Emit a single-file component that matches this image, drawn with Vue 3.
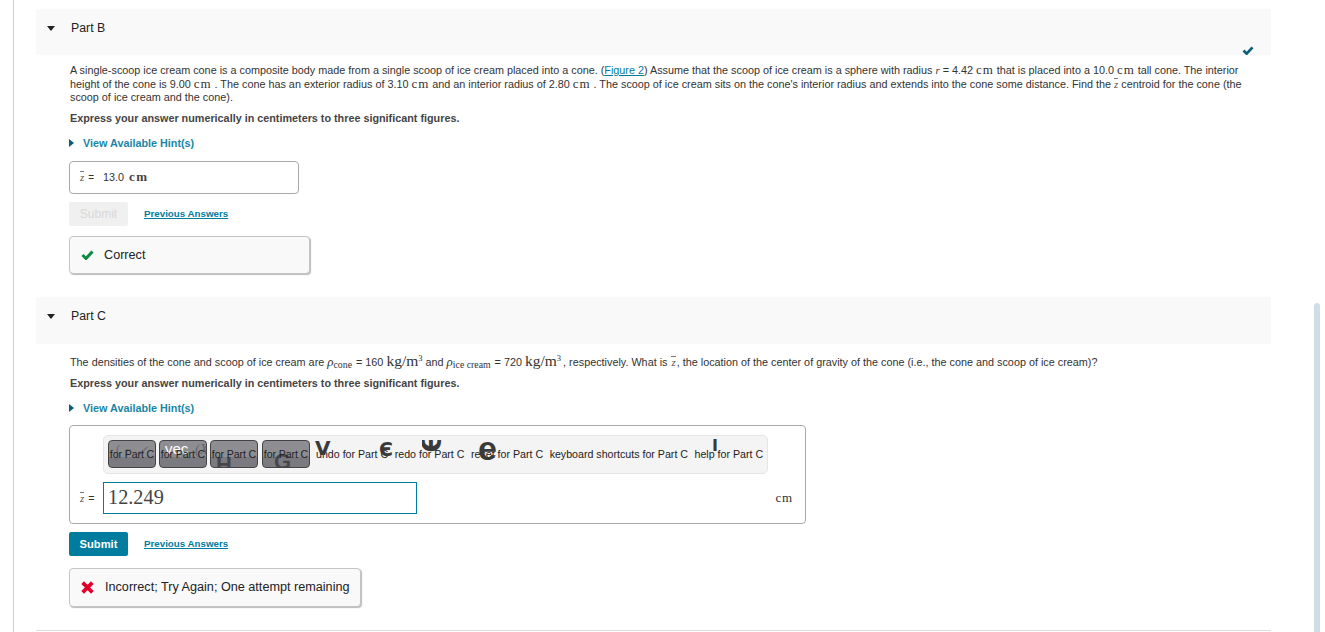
<script setup>
const tools = [
  { cls: 'ti0', icon: '∫ r ✓' },
  { cls: 'ti1', icon: 'vec' },
  { cls: 'ti2', icon: 'H' },
  { cls: 'ti3', icon: 'G' }
]
const labels = ['undo for Part C', 'redo for Part C', 'reset for Part C', 'keyboard shortcuts for Part C', 'help for Part C']
const glyphs = [
  { text: 'V', cls: 'g1' },
  { text: 'Є', cls: 'g2' },
  { text: 'e', cls: 'g4' },
  { text: 'I', cls: 'g5' }
]
</script>

<template>
  <div class="page">
    <main class="content">
      <section class="part part-b">
        <header class="head">
          <span class="caret"></span>
          <span class="title">Part B</span>
          <svg class="done" viewBox="0 0 12 10" width="12" height="9"><path d="M1 5l3.5 3.5L11 1.5" fill="none" stroke="#0b5f78" stroke-width="3"/></svg>
        </header>
        <div class="body">
          <p class="q q-b">A single-scoop ice cream cone is a composite body made from a single scoop of ice cream placed into a cone. (<a>Figure 2</a>) Assume that the scoop of ice cream is a sphere with radius <i class="m">r</i> = 4.42 <span class="m cm">cm</span> that is placed into a 10.0 <span class="m cm">cm</span> tall cone. The interior<br>height of the cone is 9.00 <span class="m cm">cm</span> . The cone has an exterior radius of 3.10 <span class="m cm">cm</span> and an interior radius of 2.80 <span class="m cm">cm</span> . The scoop of ice cream sits on the cone's interior radius and extends into the cone some distance. Find the <i class="m over">z</i> centroid for the cone (the<br>scoop of ice cream and the cone).</p>
          <p class="strong">Express your answer numerically in centimeters to three significant figures.</p>
          <div class="hint"><span class="tri"></span>View Available Hint(s)</div>
          <div class="answer-static"><i class="m over">z</i> <span class="eq">=</span> <span class="val">13.0</span> <span class="m unit">cm</span></div>
          <div class="actions">
            <button class="submit off">Submit</button>
            <a class="prev">Previous Answers</a>
          </div>
          <div class="feedback fb-ok">
            <svg viewBox="0 0 12 10" width="13" height="10"><path d="M1 5l3.5 3.5L11 1.5" fill="none" stroke="#0b8a3e" stroke-width="3"/></svg>
            <span>Correct</span>
          </div>
        </div>
      </section>

      <section class="part part-c">
        <header class="head">
          <span class="caret"></span>
          <span class="title">Part C</span>
        </header>
        <div class="body">
          <p class="q q-c">The densities of the cone and scoop of ice cream are <i class="m rho">ρ</i><sub class="m">cone</sub> = 160 <span class="m big">kg/m<sup>3</sup></span> and <i class="m rho">ρ</i><sub class="m">ice cream</sub> = 720 <span class="m big last">kg/m<sup>3</sup></span>, respectively. What is <i class="m over zc">z</i>, the location of the center of gravity of the cone (i.e., the cone and scoop of ice cream)?</p>
          <p class="strong">Express your answer numerically in centimeters to three significant figures.</p>
          <div class="hint"><span class="tri"></span>View Available Hint(s)</div>
          <div class="answer-box">
            <div class="toolbar">
              <div v-for="t in tools" :key="t.cls" class="tool">
                <span class="tool-icon" :class="t.cls">{{ t.icon }}</span>
                <span v-if="t.cls === 'ti1'" class="tool-icon ti1b">(X</span>
                <span class="tool-text">for Part C</span>
              </div>
              <div v-for="l in labels" :key="l" class="tlabel">{{ l }}</div>
              <span v-for="g in glyphs" :key="g.cls" class="glyph" :class="g.cls">{{ g.text }}</span>
              <span class="clip"><span class="glyph g3">Є</span></span>
            </div>
            <div class="entry">
              <span class="lhs"><i class="m over">z</i><span class="lhs-eq">=</span></span>
              <div class="field">12.249</div>
              <span class="m unit2">cm</span>
            </div>
          </div>
          <div class="actions a2">
            <button class="submit">Submit</button>
            <a class="prev">Previous Answers</a>
          </div>
          <div class="feedback fb-bad">
            <svg viewBox="0 0 12 12" width="13" height="13"><path d="M1.5 1.5l9 9M10.5 1.5l-9 9" stroke="#e0002b" stroke-width="3.4"/></svg>
            <span>Incorrect; Try Again; One attempt remaining</span>
          </div>
        </div>
      </section>
      <div class="rule"></div>
    </main>
    <div class="scroll"></div>
  </div>
</template>

<style>
html, body { margin: 0; background: #fff; }
</style>

<style scoped>
.page {
  position: relative;
  width: 1325px;
  height: 632px;
  overflow: hidden;
  box-sizing: border-box;
  padding: 9px 0 0 36px;
  font-family: "Liberation Sans", Arial, sans-serif;
  color: #333;
  background: #fff;
}
.page::before {
  content: "";
  position: absolute;
  left: 13px;
  top: 0;
  bottom: 0;
  width: 1px;
  background: #c5d3e4;
}
.content { width: 1235px; }
.head {
  position: relative;
  height: 46px;
  background: #f9f9f9;
  display: flex;
  align-items: center;
  padding-bottom: 8px;
  box-sizing: border-box;
  font-size: 12.3px;
  color: #222;
}
.part-c .head { height: 47px; }
.caret {
  width: 0; height: 0;
  margin: 0 16px 0 11px;
  border-left: 4.5px solid transparent;
  border-right: 4.5px solid transparent;
  border-top: 5px solid #222;
}
.done { position: absolute; right: 17px; bottom: 0; }
.body { padding-left: 33px; }
.q { margin: 0 0 0 1px; font-size: 10.82px; line-height: 13.5px; white-space: nowrap; }
.q-b { padding-top: 9px; }
.q-c { padding-top: 10px; line-height: 16px; }
.cm { font-size: 13px; line-height: 0; letter-spacing: .9px; color: #333; }
.strong { margin: 6px 0 0 1px; font-size: 10.8px; line-height: 14px; font-weight: 700; color: #444; }
.q-c + .strong { margin-top: 6px; }
.q a { color: #007c9e; text-decoration: underline; }
.m { font-family: "Liberation Serif", serif; }
.rho { font-size: 13px; line-height: 0; }
.over { position: relative; color: #555; }
.over::before { content: ""; position: absolute; left: 0; right: 0; top: 0; height: 1px; background: #777; }
.zc { margin: 0 1px; }
.big { font-size: 15.5px; line-height: 0; }
.last { margin-right: 2px; }
sub.m { font-size: 9.8px; line-height: 0; vertical-align: -2px; margin-right: 1px; }
sup { font-size: 8.5px; line-height: 0; vertical-align: 5px; }
.hint {
  margin-top: 11px;
  height: 14px;
  display: flex;
  align-items: center;
  font-size: 10.8px;
  font-weight: 700;
  color: #1a86a6;
}
.tri {
  width: 0; height: 0;
  margin-right: 9px;
  border-top: 4px solid transparent;
  border-bottom: 4px solid transparent;
  border-left: 5px solid #0a5d78;
}
.answer-static {
  margin-top: 11px;
  width: 230px;
  height: 33px;
  box-sizing: border-box;
  border: 1px solid #aaa;
  border-radius: 4px;
  display: flex;
  align-items: center;
  gap: 4px;
  padding-left: 10px;
  font-size: 10.8px;
}
.val { margin-left: 5px; }
.eq { font-size: 10px; }
.unit { font-size: 13px; letter-spacing: 1.5px; font-weight: 700; color: #444; margin-left: 1px; }
.actions {
  margin-top: 8px;
  display: flex;
  align-items: center;
  gap: 16px;
}
.submit {
  width: 59px;
  height: 24px;
  border: 0;
  border-radius: 2px;
  padding: 0;
  font: 700 11.2px "Liberation Sans", Arial, sans-serif;
  background: #007c9e;
  color: #fff;
}
.submit.off { background: #f0f0f0; color: #d8d8d8; font-weight: 400; font-size: 12px; }
.prev {
  font-size: 9.75px;
  font-weight: 700;
  color: #007c9e;
  text-decoration: underline;
}
.feedback {
  margin-top: 10px;
  height: 38px;
  width: max-content;
  box-sizing: border-box;
  display: flex;
  align-items: center;
  gap: 10px;
  padding: 0 10px 0 11px;
  background: #f9f9f9;
  border: 1px solid #c4c4c4;
  border-radius: 4px;
  box-shadow: 1px 1px 1px #bbb;
  font-size: 12.65px;
  color: #222;
}
.fb-ok { width: 241px; }
.fb-bad { margin-top: 12px; height: 39px; width: 292px; gap: 11px; }
.part-c { margin-top: 23px; }
.answer-box {
  margin-top: 10px;
  width: 737px;
  height: 99px;
  box-sizing: border-box;
  border: 1px solid #aaa;
  border-radius: 4px;
  padding: 9px 12px 0 33px;
}
.toolbar {
  position: relative;
  width: 665px;
  height: 39px;
  box-sizing: border-box;
  background: #f4f4f4;
  border: 1px solid #e6e6e6;
  border-radius: 5px;
  display: flex;
  align-items: center;
  padding-left: 4px;
  font-size: 10.65px;
  white-space: nowrap;
}
.tool {
  position: relative;
  width: 48px;
  height: 28px;
  box-sizing: border-box;
  margin-right: 3px;
  flex: none;
  overflow: hidden;
  border: 1px solid #444;
  border-radius: 4px;
  background: linear-gradient(#8e8d92 0 60%, #7b7a80 60% 100%);
  display: flex;
  align-items: center;
  justify-content: center;
  color: #222;
}
.tool:nth-child(3) { margin-right: 4px; }
.tool-text { position: relative; font-size: 10.6px; letter-spacing: -.1px; }
.tool-icon { position: absolute; line-height: 1; }
.ti0 { left: 6px; top: 1px; color: #6c6b70; font: italic 15px "Liberation Serif", serif; word-spacing: 2px; }
.ti1 { left: 5px; top: 0; color: #fff; font-size: 15px; }
.ti1b { left: 35px; top: 1px; color: #66656a; font: italic 14px "Liberation Serif", serif; }
.ti2 { left: 5px; top: 13px; font-size: 22px; color: #47474a; font-weight: 700; }
.ti3 { left: 11px; top: 10px; font-size: 22px; color: #47474a; font-weight: 700; }
.tlabel { margin-left: 6.5px; color: #222; }
.tlabel:nth-child(5) { margin-left: 3px; }
.glyph {
  position: absolute;
  font-family: "DejaVu Sans", sans-serif;
  font-weight: 700;
  line-height: 1;
  color: #3a3a3a;
}
.g1 { left: 211px; top: 2px; font-size: 20px; }
.g2 { left: 275px; top: 4px; font-size: 19px; }
.clip { position: absolute; left: 318px; top: 4px; width: 26px; height: 14px; overflow: hidden; }
.g3 { left: 0; top: -10px; font-size: 26px; transform: rotate(-90deg); }
.g4 { left: 374px; top: -5px; font: 700 34px/1 "Liberation Sans", sans-serif; }
.g5 { left: 608px; top: 2px; font-size: 16px; }
.entry {
  display: flex;
  align-items: center;
  margin: 8px 0 0 -26px;
}
.lhs { width: 26px; font-size: 10.8px; box-sizing: border-box; padding-left: 3px; }
.lhs-eq { margin-left: 4px; }
.field {
  width: 314px;
  height: 32px;
  box-sizing: border-box;
  border: 1px solid #007c9e;
  padding-left: 4px;
  font: 20.3px/28px "Liberation Serif", serif;
  color: #444;
}
.unit2 { margin-left: auto; font-size: 13px; letter-spacing: .8px; color: #333; }
.a2 { margin-top: 8px; }
.rule { height: 1px; margin-top: 23px; background: #ddd; }
.scroll {
  position: absolute;
  left: 1314px;
  top: 303px;
  width: 6px;
  height: 329px;
  background: #d0dce6;
  border-radius: 3px 3px 0 0;
}
</style>
